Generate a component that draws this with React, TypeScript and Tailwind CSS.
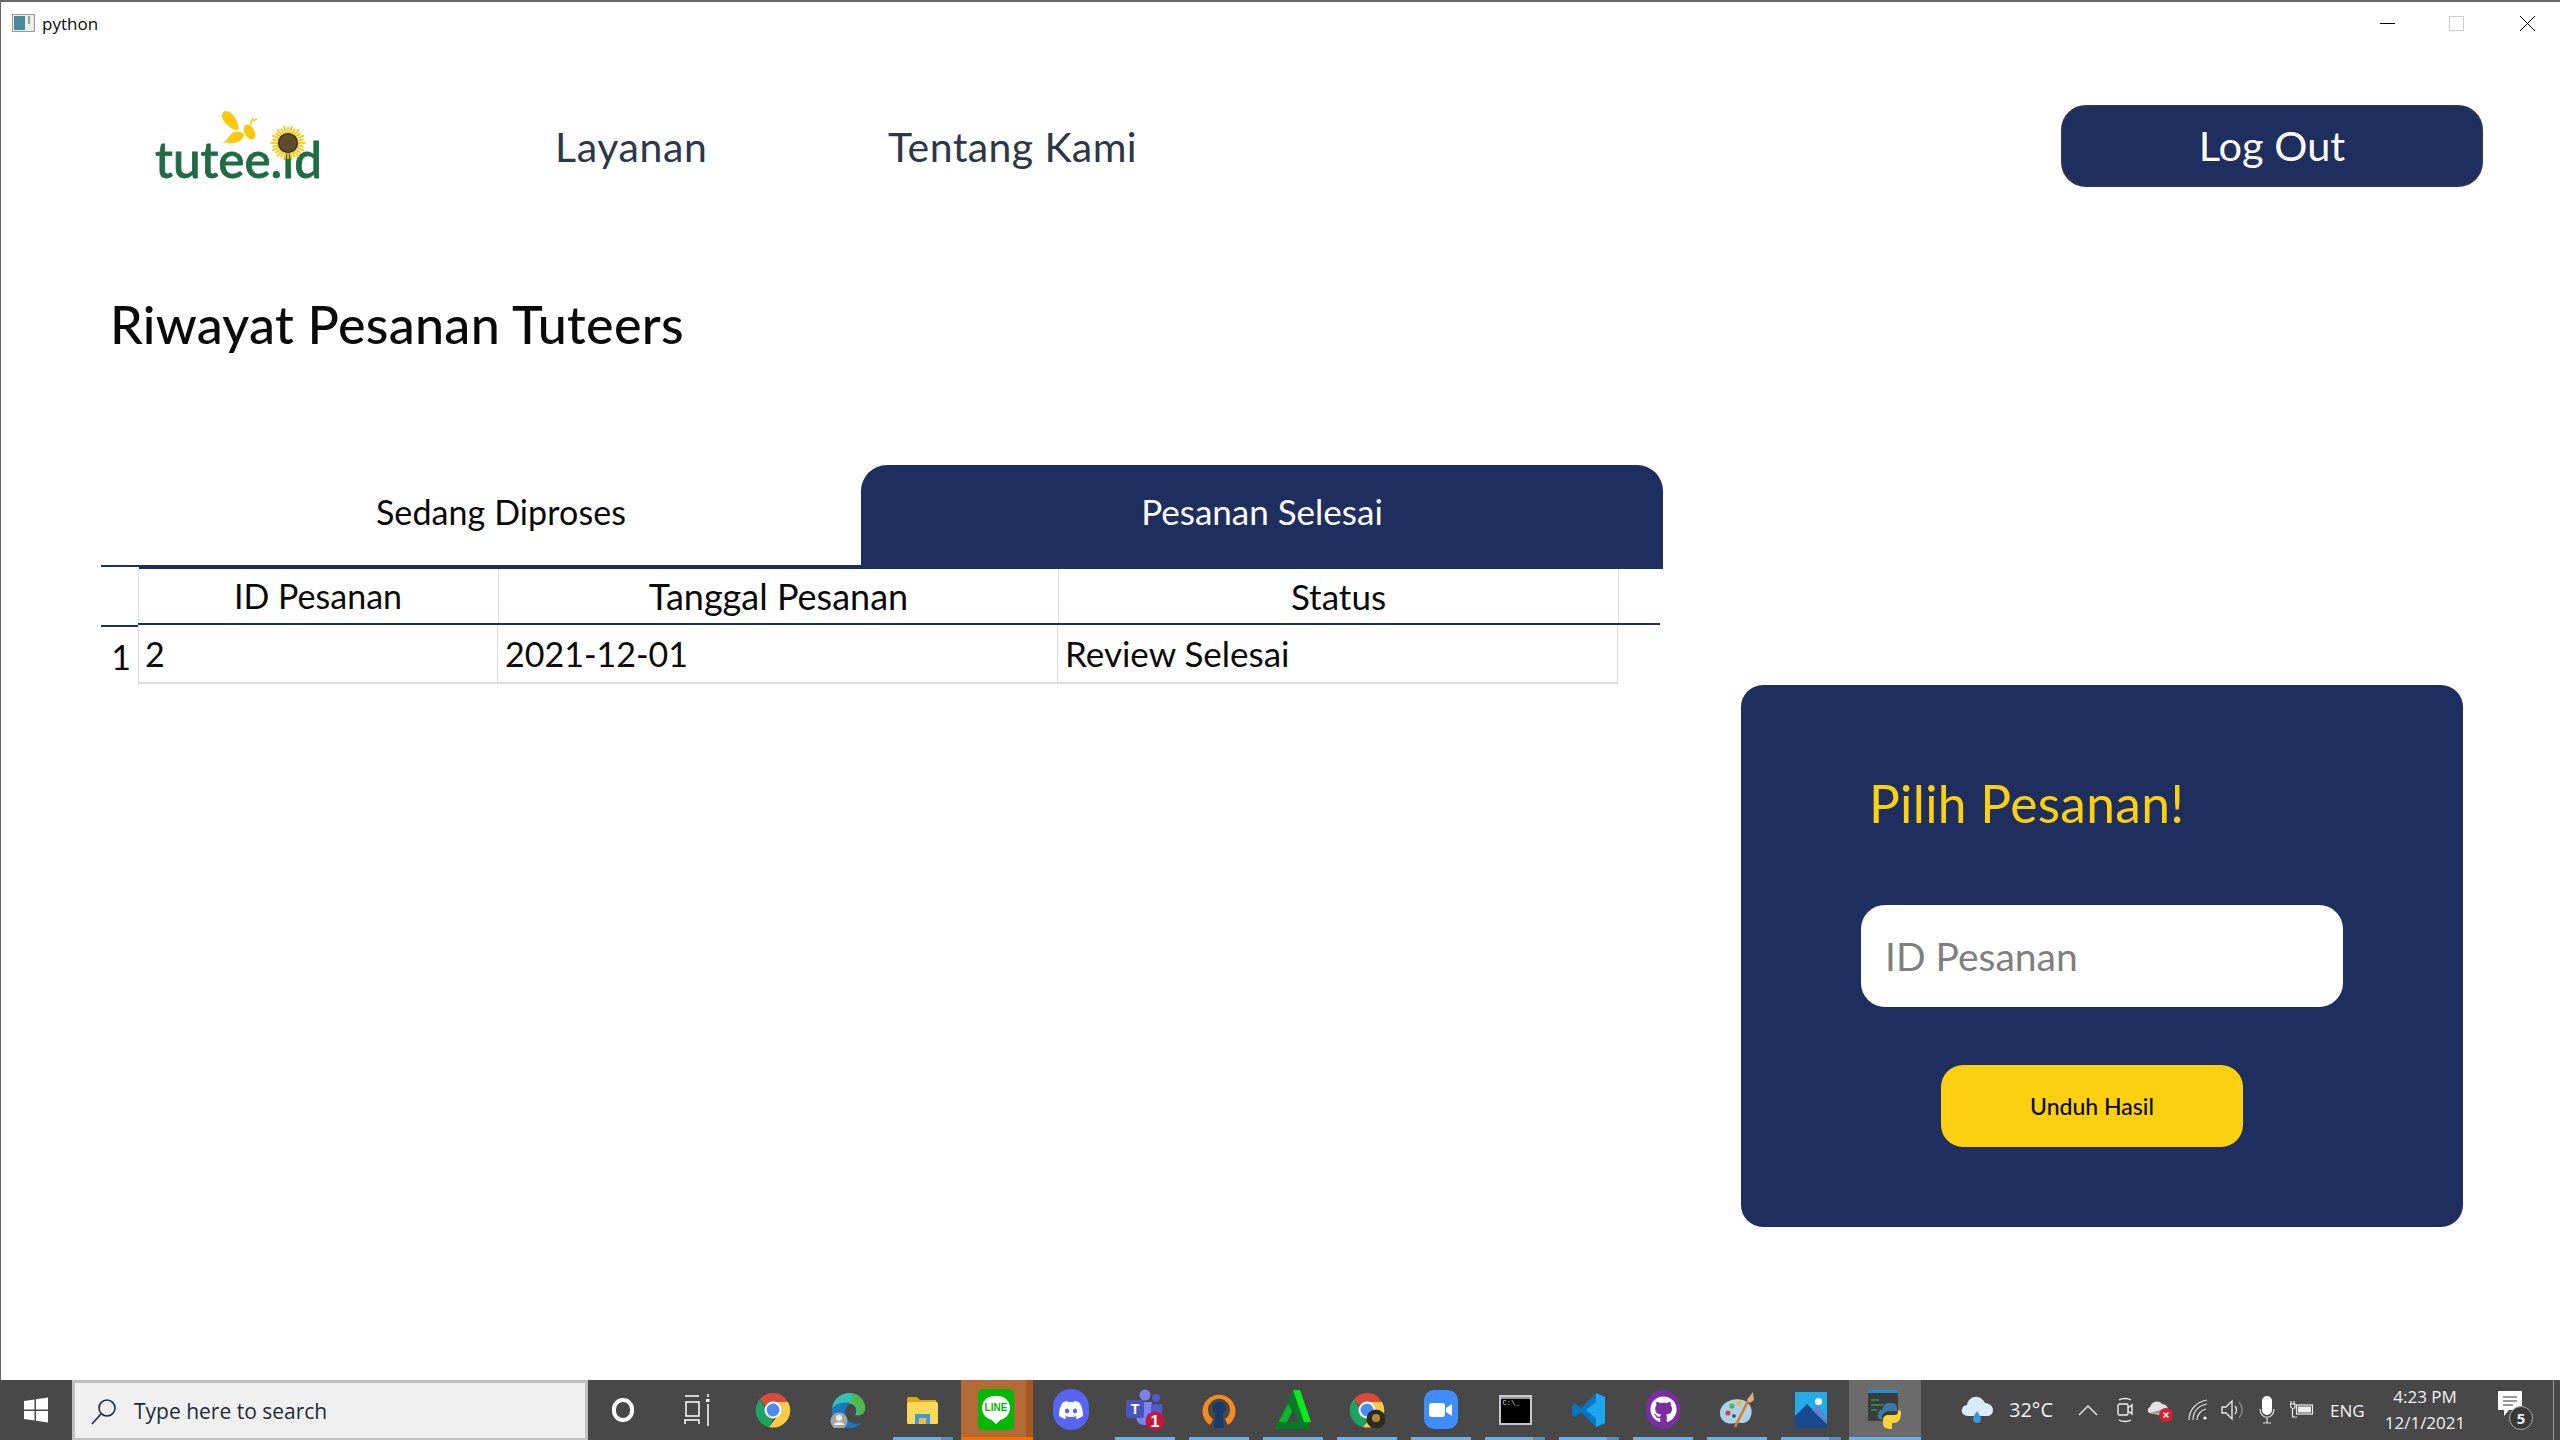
import React from "react";
import { FaDiscord, FaGithub } from "react-icons/fa";

const Svg = ({ children, w = 36, h = 36 }: { children: React.ReactNode; w?: number; h?: number }) => (
  <svg width={w} height={h} viewBox={`0 0 ${w} ${h}`}>{children}</svg>
);

const Logo = () => (
  <svg width="180" height="100" viewBox="0 0 180 100">
    <text x="5" y="73" fontFamily="Lato" fontSize="50" fontWeight="500" stroke="#1f6b45" strokeWidth="0.8" fill="#1f6b45" textLength="167" lengthAdjust="spacingAndGlyphs">tutee.id</text>
    <path d="M76 6 C72 6 71 11 73 15 C76 20 84 26 88 25 C90 19 83 6 76 6Z" fill="#fdc70c" />
    <path d="M70 39 C76 37 78 32 82 28 C87 25 93 27 94 30 C93 36 85 39 79 38 C75 37 73 38 70 39Z" fill="#fdc70c" />
    <ellipse cx="99.5" cy="27" rx="5" ry="8" transform="rotate(-30 99.5 27)" fill="#fdc70c" />
    <path d="M100 20 L103 13 M102 16 L107 14" stroke="#fdc70c" strokeWidth="1.4" fill="none" />
    <g stroke="#fdc70c" strokeWidth="1.8">
      {Array.from({ length: 28 }).map((_, i) => {
        const a = (i * Math.PI) / 14;
        const r = i % 2 ? 16 : 17.5;
        return <line key={i} x1={138 + 8 * Math.cos(a)} y1={38 + 8 * Math.sin(a)} x2={138 + r * Math.cos(a)} y2={38 + r * Math.sin(a)} />;
      })}
    </g>
    <circle cx="138" cy="38" r="9.5" fill="#5e4d2b" stroke="#2d2a20" strokeWidth="1.2" />
  </svg>
);

const Chrome = ({ badge = false }: { badge?: boolean }) => (
  <svg width="36" height="36" viewBox="0 0 36 36">
    <path d="M18 1 A17 17 0 0 1 33 10 L18 10 A8 8 0 0 0 10 14 L5 7 A17 17 0 0 1 18 1Z" fill="#db4a3d" />
    <path d="M5 7 L12 20 A8 8 0 0 0 19 26 L14 35 A17 17 0 0 1 5 7Z" fill="#1ea362" />
    <path d="M33 10 A17 17 0 0 1 14 35 L24 22 A8 8 0 0 0 24 13 L18 10Z" fill="#f7cb47" />
    <circle cx="18" cy="18" r="8.5" fill="#fff" />
    <circle cx="18" cy="18" r="6.5" fill="#4d8bf0" />
    {badge && <circle cx="27" cy="27" r="9.5" fill="#2c2a22" />}
    {badge && <circle cx="27" cy="26" r="4" fill="#b08a36" />}
  </svg>
);

const Edge = () => (
  <Svg>
    <path d="M2 17 C3 6 12 1 19 1 C29 1 35 8 35 17 C35 22 30 24 25 23 C28 19 26 12 19 11 C10 10 5 14 2 17Z" fill="#35c1b8" />
    <path d="M17 12 C24 11 30 16 27 22 C31 24 35 21 35 16 C35 8 29 1 19 1 C26 3 22 10 17 12Z" fill="#4fb84e" />
    <path d="M2 17 C1 28 9 36 19 36 C24 36 29 34 32 31 C25 33 18 31 16 25 C14 19 16 14 20 11 C12 9 4 13 2 17Z" fill="#1a78c2" />
    <circle cx="9" cy="29" r="8.5" fill="#a5a5a5" />
    <circle cx="9" cy="26" r="3" fill="#eee" />
    <path d="M3.5 33 C5 29 13 29 14.5 33 Z" fill="#eee" />
  </Svg>
);

const Explorer = () => (
  <Svg>
    <path d="M2 7 C2 5 3 5 4 5 L12 5 L15 8 L31 8 L31 12 L2 12Z" fill="#e2a80f" />
    <rect x="2" y="10" width="31" height="22" rx="1.5" fill="#fbd75b" />
    <path d="M10 32 L10 22 L25 22 L25 32 L21 32 L21 26 L14 26 L14 32Z" fill="#3a9bd9" />
    <rect x="14" y="26" width="7" height="6" fill="#f5b93f" />
  </Svg>
);

const Line = () => (
  <div className="w-[36px] h-[41px] rounded-[5px] bg-[#00b900] flex items-center justify-center">
    <div className="relative w-[28px] h-[24px] rounded-full bg-white flex items-center justify-center -mt-[3px]">
      <span className="text-[#00b900] text-[10px] font-bold leading-none [font-family:'Liberation_Sans',sans-serif]">LINE</span>
      <div className="absolute -bottom-[3px] left-[11px] w-[6px] h-[6px] bg-white rotate-45" />
    </div>
  </div>
);

const Discord = () => (
  <div className="w-[36px] h-[41px] rounded-full bg-[#5865f2] flex items-center justify-center">
    <FaDiscord className="text-white" size={26} />
  </div>
);

const Teams = () => (
  <svg width="40" height="44" viewBox="0 0 40 44">
    <circle cx="20" cy="7" r="5.5" fill="#7b83eb" />
    <circle cx="31" cy="10" r="4" fill="#5059c9" />
    <path d="M11 14 H27 V30 C27 35 23 37 19 37 C14 37 11 33 11 28Z" fill="#7b83eb" />
    <path d="M26 16 H37 V27 C37 31 33 33 30 33 L26 33Z" fill="#5059c9" />
    <rect x="1" y="12" width="18" height="18" rx="2" fill="#4b53bc" />
    <text x="10" y="26" textAnchor="middle" fontFamily="Liberation Sans" fontWeight="700" fontSize="14" fill="#fff">T</text>
    <circle cx="30" cy="33" r="9.5" fill="#c4173d" />
    <text x="30" y="39" textAnchor="middle" fontFamily="Liberation Sans" fontWeight="700" fontSize="16" fill="#fff">1</text>
  </svg>
);

const OpenVpn = () => (
  <svg width="36" height="40" viewBox="0 0 36 40">
    <path d="M9 35 A16.5 16.5 0 1 1 27 35 L24 29 A11 11 0 1 0 12 29Z" fill="#f58a1f" />
    <circle cx="18" cy="18" r="6.5" fill="#1a3a6b" />
    <path d="M15 20 H21 L23 38 H13Z" fill="#1a3a6b" />
  </svg>
);

const Tri = () => (
  <svg width="38" height="42" viewBox="0 0 38 42">
    <path d="M19 1 L37 40 L1 40Z" fill="#0a7a2a" />
    <path d="M19 1 L26 1 L37 33 L30 33Z" fill="#0bea1c" />
    <path d="M1 40 L14 15 L19 24 L11 36Z" fill="#0fb52a" />
    <path d="M13 33 L25 33 L19 21Z" fill="#484848" />
    <path d="M3 33 L32 33 L37 40 L1 40Z" fill="#067a25" />
  </svg>
);

const Zoom = () => (
  <div className="w-[34px] h-[39px] rounded-[10px] bg-[#3f8cff] flex items-center justify-center">
    <svg width="24" height="16" viewBox="0 0 24 16">
      <rect x="0" y="1" width="16" height="14" rx="3" fill="#fff" />
      <path d="M17 6 L23 2 V14 L17 10Z" fill="#fff" />
    </svg>
  </div>
);

const Cmd = () => (
  <div className="w-[33px] h-[30px] border-2 border-[#c8c8c8] bg-black flex flex-col">
    <div className="h-[2px] bg-[#999]" />
    <span className="text-[7px] leading-[9px] text-[#ddd] pl-[2px] font-mono">C:\_</span>
  </div>
);

const VsCode = () => (
  <Svg>
    <path d="M25 1 L34 5 V31 L25 35 L10 20 L4 25 L1 22 V14 L4 11 L10 16Z" fill="#0078c4" />
    <path d="M25 1 L34 5 V31 L25 35 Z M25 10 L15 18 L25 26Z" fill="#1ea7ef" />
  </Svg>
);

const Github = () => (
  <div className="w-[34px] h-[39px] rounded-full bg-[#7b2e9f] flex items-center justify-center">
    <FaGithub className="text-white" size={27} />
  </div>
);

const Paint = () => (
  <Svg>
    <path d="M1 21 C1 11 13 5 24 8 C33 11 35 21 30 28 C25 33 20 30 16 31 C10 33 1 30 1 21Z" fill="#a9d3ea" />
    <circle cx="9" cy="21" r="2.6" fill="#d8453b" />
    <circle cx="13" cy="14" r="2.6" fill="#5fae4b" />
    <circle cx="20" cy="11" r="2.6" fill="#f2b52c" />
    <circle cx="15" cy="24" r="1.8" fill="#37474f" />
    <path d="M16 35 L30 7" stroke="#e07a1f" strokeWidth="2.6" />
    <path d="M28 8 L34 0 L35 8 L31 11Z" fill="#d8b27e" />
  </Svg>
);

const Photos = () => (
  <div className="relative w-[32px] h-[36px] bg-[#22ace8] overflow-hidden">
    <div className="absolute right-[5px] top-[6px] w-[7px] h-[7px] rounded-full bg-white" />
    <svg className="absolute inset-0" width="32" height="36" viewBox="0 0 32 36">
      <path d="M0 24 L12 12 L32 32 V36 H0Z" fill="#16498e" />
      <path d="M17 18 L23 13 L32 27 V32Z" fill="#5d83d6" />
    </svg>
  </div>
);

const PythonApp = () => (
  <svg width="34" height="40" viewBox="0 0 34 40">
    <rect x="0" y="1" width="30" height="30" fill="#3c3c3c" />
    <rect x="0" y="0" width="30" height="3" fill="#1c8fd6" />
    <path d="M3 10 H11 M3 15 H15 M3 20 H9" stroke="#2e9e4a" strokeWidth="1.4" />
    <path d="M14 26 C14 14 17 13 22 13 C28 13 29 15 29 19 V21 H21 C16 21 14 22 14 26Z" fill="#3b79a8" />
    <path d="M13 20 H20 V21 C14 22 14 26 14 30 C11 30 10 27 10 25 C10 22 11 20 13 20Z" fill="#3b79a8" />
    <path d="M33 22 C33 32 29 33 24 33 V39 C18 39 15 37 15 34 V30 C15 27 17 25 21 25 H27 C30 25 30 22 30 20 C32 20 33 21 33 22Z" fill="#fbd23e" />
  </svg>
);

const Cloud = () => (
  <svg width="32" height="32" viewBox="0 0 32 32">
    <path d="M7 22 C2 22 0 18 1 15 C2 12 4 11 6 11 C7 5 12 2 17 3 C21 4 23 7 24 9 C28 9 32 12 32 16 C32 20 29 22 26 22Z" fill="#d8ecfa" />
    <path d="M16 17 C18 20 20 23 20 25 A4 4 0 0 1 12 25 C12 23 14 20 16 17Z" fill="#3d97e0" />
  </svg>
);

type SlotProps = { children?: React.ReactNode; bar?: boolean; split?: boolean; line?: boolean; active?: boolean; wide?: boolean };

const Slot = ({ children, bar, split, line, active, wide }: SlotProps) => (
  <div className={`relative ${wide ? "w-[75px]" : "w-[74px]"} h-full flex items-center justify-center ${line ? "pr-[2px]" : ""}`}>
    {line && <div className="absolute inset-y-0 left-0 w-[72px] bg-[#b26a37]"><div className="absolute inset-y-0 right-0 w-[7px] bg-[#a4581f]" /><div className="absolute bottom-0 inset-x-0 h-[3px] bg-[#f76f00]" /></div>}
    {active && <div className="absolute inset-y-0 left-0 w-[72px] bg-[#6b6b6b]"><div className="absolute bottom-0 inset-x-0 h-[3px] bg-[#6cb0e6]" /></div>}
    {bar && <div className="absolute bottom-0 left-[6px] w-[60px] h-[3px] bg-[#6cb0e6]">{split && <div className="absolute inset-y-0 right-0 w-[12px] bg-[#5a8db5]" />}</div>}
    <div className="relative flex items-center justify-center -mt-[1px] -ml-[2px]">{children}</div>
  </div>
);

const Taskbar = () => (
  <div className="h-[60px] shrink-0 bg-[#484848] flex text-white [font-family:'Open_Sans',sans-serif]">
    <div className="w-[72px] h-full flex items-center justify-center">
      <svg width="26" height="26" viewBox="0 0 26 26" fill="#fff">
        <path d="M1 4 L11.5 2.5 V12.5 H1Z M13 2.2 L25 0.5 V12.5 H13Z M1 14 H11.5 V23.5 L1 22Z M13 14 H25 V25.5 L13 23.8Z" />
      </svg>
    </div>
    <div className="w-[516px] h-full bg-[#f0f0f0] border-[3px] border-b-[2px] border-[#c0c0c0] flex items-center pl-[15px] gap-[17px] text-[#1f2a38] -mr-[2px]">
      <svg width="28" height="28" viewBox="0 0 28 28" fill="none" stroke="#1f2a38" strokeWidth="1.6">
        <circle cx="17" cy="11" r="8" />
        <path d="M11 17 L2 27" />
      </svg>
      <span className="text-[21px] leading-none -ml-[1px] mt-[2px]">Type here to search</span>
    </div>
    <Slot wide>
      <div className="w-[22px] h-[24px] rounded-full border-[4px] border-white" />
    </Slot>
    <Slot wide>
      <svg width="28" height="36" viewBox="0 0 28 36" fill="none" stroke="#fff" strokeWidth="1.5">
        <path d="M1 4 H15 M1 32 V28 H15 V32 M2 10 H15 V24 H2Z M24 2 V5 M24 12 V34" />
        <rect x="22" y="7" width="3.5" height="3" fill="#fff" stroke="none" />
      </svg>
    </Slot>
    <Slot wide><Chrome /></Slot>
    <Slot wide><Edge /></Slot>
    <div className="w-[1px]" />
    <Slot bar split><Explorer /></Slot>
    <Slot line><Line /></Slot>
    <Slot><Discord /></Slot>
    <Slot bar><Teams /></Slot>
    <Slot bar><OpenVpn /></Slot>
    <Slot bar><Tri /></Slot>
    <Slot bar><Chrome badge /></Slot>
    <Slot bar><Zoom /></Slot>
    <Slot bar split><Cmd /></Slot>
    <Slot bar split><VsCode /></Slot>
    <Slot bar><Github /></Slot>
    <Slot bar><Paint /></Slot>
    <Slot bar split><Photos /></Slot>
    <Slot active><PythonApp /></Slot>
    <div className="flex-1 flex items-center text-[#f0f0f0] h-full">
      <div className="ml-[38px]"><Cloud /></div>
      <span className="ml-[16px] text-[20px] w-[46px] leading-none">32°C</span>
      <svg className="ml-[23px]" width="20" height="12" viewBox="0 0 20 12" fill="none" stroke="#eee" strokeWidth="1.4"><path d="M1 11 L10 2 L19 11" /></svg>
      <svg className="ml-[18px]" width="18" height="26" viewBox="0 0 18 26" fill="none" stroke="#eee" strokeWidth="1.4">
        <rect x="2" y="7" width="10" height="11" rx="1.5" />
        <path d="M12 11 L16 8 V17 L12 14 M3 3 C6 1 12 1 15 3 M3 23 C6 25 12 25 15 23" />
      </svg>
      <svg className="ml-[13px]" width="26" height="24" viewBox="0 0 26 24">
        <path d="M3 15 C0 15 0 10 3 9 C5 3 12 2 15 6 C19 6 21 9 21 12 L12 17Z" fill="#e2e2e2" />
        <path d="M3 15 L20 10 C21 15 10 17 3 15Z" fill="#999" />
        <circle cx="19" cy="17" r="7" fill="#d81f2a" />
        <path d="M16.5 14.5 L21.5 19.5 M21.5 14.5 L16.5 19.5" stroke="#fff" strokeWidth="1.5" />
      </svg>
      <svg className="ml-[15px]" width="20" height="22" viewBox="0 0 20 22" fill="none" stroke="#ddd" strokeWidth="1.2">
        <path d="M1 21 C1 11 8 3 19 1 M5 21 C5 13 10 7 19 5 M9 21 C9 16 13 11 18 10" />
        <circle cx="17" cy="19" r="1.6" fill="#fff" stroke="none" />
      </svg>
      <svg className="ml-[13px]" width="22" height="22" viewBox="0 0 22 22" fill="none" stroke="#eee" strokeWidth="1.3">
        <path d="M1 8 H5 L11 2 V20 L5 14 H1Z M14 7 C16 9 16 13 14 15" />
        <path d="M18 3 C22 8 22 14 18 19" stroke="#888" />
      </svg>
      <svg className="ml-[16px]" width="16" height="28" viewBox="0 0 16 28">
        <rect x="3" y="0" width="10" height="19" rx="5" fill="#fff" />
        <path d="M1 13 C1 24 15 24 15 13 M8 21 V27 M4 27 H12" fill="none" stroke="#ddd" strokeWidth="1.2" />
      </svg>
      <svg className="ml-[15px]" width="24" height="20" viewBox="0 0 24 20" fill="none" stroke="#eee" strokeWidth="1.2">
        <rect x="6.5" y="5" width="16" height="9" />
        <rect x="8" y="6.5" width="13" height="6" fill="#eee" stroke="none" />
        <path d="M1 1 V4 M4 1 V4 M0 4 H5 V7 C5 9 1 9 1 7Z M2.5 9 V17 H7" />
      </svg>
      <span className="ml-[16px] text-[17px] leading-none w-[36px]">ENG</span>
      <div className="ml-[17px] w-[84px] flex flex-col items-center gap-[9px] text-[17px] leading-none -mt-[1px]">
        <span>4:23 PM</span>
        <span>12/1/2021</span>
      </div>
      <div className="relative ml-[30px] w-[36px] h-[40px]">
        <svg width="26" height="28" viewBox="0 0 26 28">
          <path d="M1 1 H25 V20 H12 L7 26 V20 H1Z" fill="#fff" />
          <path d="M6 7 H20 M6 11 H20 M6 15 H16" stroke="#777" strokeWidth="1.3" />
        </svg>
        <div className="absolute right-0 bottom-0 w-[24px] h-[24px] rounded-full bg-[#3a3a3a] border border-[#aaa] flex items-center justify-center text-[15px] font-bold leading-none">5</div>
      </div>
      <div className="ml-auto mr-[6px] w-px h-full bg-[#999]" />
    </div>
  </div>
);

const Vbar = "border-l border-[#dcdcdc]";

export default function App() {
  return (
    <div className="w-[2560px] h-[1440px] flex flex-col bg-white overflow-hidden [font-family:Lato,sans-serif] text-[#0a0a0a]">
      <div className="flex-1 min-h-0 flex flex-col border-l border-t-2 border-[#666]">
        <div className="h-[42px] shrink-0 flex items-center pl-[11px] [font-family:'Open_Sans',sans-serif]">
          <svg width="23" height="18" viewBox="0 0 23 18">
            <rect x="0.5" y="0.5" width="22" height="17" fill="#ececec" stroke="#9a9a9a" />
            <rect x="2" y="2" width="11" height="14" fill="#4c8a9a" />
            <rect x="16" y="2" width="2" height="8" fill="#7fb08a" />
          </svg>
          <span className="ml-[7px] text-[17px] leading-none mt-[1px]">python</span>
          <div className="ml-auto flex items-center h-full">
            <div className="w-[15px] h-px bg-black mr-[54px]" />
            <div className="w-[15px] h-[15px] border border-[#ccc] mr-[56px]" />
            <svg className="mr-[25px]" width="15" height="15" viewBox="0 0 15 15" stroke="#000"><path d="M0 0 L15 15 M15 0 L0 15" /></svg>
          </div>
        </div>

        <div className="h-[82px] mt-[61px] shrink-0 flex items-center relative">
          <div className="ml-[149px] w-[180px] h-[82px] self-start"><Logo /></div>
          <a className="ml-[225px] w-[333px] text-[41px] leading-none text-[#2d3748] tracking-[0.6px]">Layanan</a>
          <a className="text-[41px] leading-none text-[#2d3748] tracking-[0.4px]">Tentang Kami</a>
          <button className="ml-auto mr-[77px] w-[422px] h-[82px] rounded-[25px] bg-[#1e2e5e] border-2 border-[#2d3550] text-white text-[41.5px] leading-none">Log Out</button>
        </div>

        <div className="flex-1 flex min-h-0">
          <div className="ml-[100px] w-[1563px] shrink-0">
            <h1 className="mt-[107px] ml-[9px] text-[52px] leading-[60px] font-medium tracking-[0.3px]">Riwayat Pesanan Tuteers</h1>
            <div className="mt-[111px] h-[104px] flex">
              <div className="w-[38px] h-[102px] border-b-2 border-[#1e2e5e]" />
              <div className="w-[722px] h-[104px] border-b-4 border-[#1e2e5e] flex items-center justify-center text-[34px] leading-none pb-[6px] pl-[2px] tracking-[0.1px]">Sedang Diproses</div>
              <div className="w-[802px] h-[104px] rounded-t-[26px] bg-[#1e2e5e] text-white flex items-center justify-center text-[35px] leading-none pb-[12px]">Pesanan Selesai</div>
            </div>
            <div className="flex text-[34px] leading-none">
              <div className="w-[38px] border-r border-[#dcdcdc] h-[117px]">
                <div className="h-[58px] border-b-2 border-[#1e2e5e]" />
                <div className="text-right pr-[7px] pt-[13px]">1</div>
              </div>
              <div className="w-[1522px] -ml-px">
                <div className="h-[56px] flex border-b-2 border-[#1e2e5e]">
                  <div className="w-[360px] flex items-center justify-center">ID Pesanan</div>
                  <div className={`w-[560px] flex items-center justify-center text-[36px] ${Vbar}`}>Tanggal Pesanan</div>
                  <div className={`w-[560px] flex items-center justify-center text-[35px] ${Vbar}`}>Status</div>
                  <div className={`flex-1 ${Vbar}`} />
                </div>
                <div className="h-[59px] w-[1480px] flex border-b-2 border-[#dcdcdc]">
                  <div className="w-[359px] flex items-center pl-[7px]">2</div>
                  <div className={`w-[560px] flex items-center pl-[7px] ${Vbar}`}>2021-12-01</div>
                  <div className={`flex-1 flex items-center pl-[7px] text-[35px] ${Vbar} border-r`}>Review Selesai</div>
                </div>
              </div>
            </div>
          </div>
          <div className="ml-[77px] mt-[498px] w-[722px] h-[542px] rounded-[22px] bg-[#1e2e5e] shrink-0 flex flex-col">
            <div className="ml-[128px] mt-[88px] text-[51.5px] leading-[60px] text-[#fad010] tracking-[0.3px]">Pilih Pesanan!</div>
            <div className="ml-[120px] mt-[72px] w-[482px] h-[102px] rounded-[24px] bg-white flex items-center pl-[24px] text-[39px] leading-none text-[#7f7f7f]">ID Pesanan</div>
            <button className="ml-[200px] mt-[58px] w-[302px] h-[82px] rounded-[22px] bg-[#fad010] text-[#0a0a0a] text-[23px] leading-none font-medium">Unduh Hasil</button>
          </div>
        </div>
      </div>
      <Taskbar />
    </div>
  );
}
